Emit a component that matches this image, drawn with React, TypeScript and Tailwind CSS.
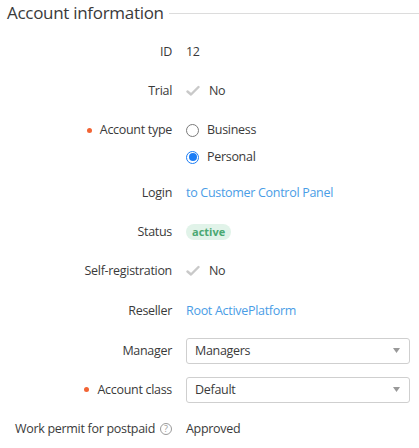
import React from "react";

const font = { fontFamily: '"Open Sans", "Noto Sans", sans-serif' };

function Check() {
  return (
    <svg width="14" height="12" viewBox="0 0 14 12" className="mr-[9px]">
      <path d="M1.5 6.5 L5 9.5 L12.5 2" fill="none" stroke="#c9c9c9" strokeWidth="2.4" strokeLinecap="round" strokeLinejoin="round" />
    </svg>
  );
}

function Caret() {
  return (
    <svg width="7" height="5" viewBox="0 0 7 5">
      <path d="M0 0 H7 L3.5 5 Z" fill="#999" />
    </svg>
  );
}

function Label({ children, required, className = "" }: { children: React.ReactNode; required?: boolean; className?: string }) {
  return (
    <div className={`flex items-center justify-end text-[#3a3a3a] ${className}`}>
      {required && <span className="w-[5px] h-[5px] rounded-full bg-[#f26434] mr-[8px]" />}
      {children}
    </div>
  );
}

function Select({ value }: { value: string }) {
  return (
    <div className="w-[224px] h-[26px] border border-[#cfcfcf] rounded-[3px] flex items-center justify-between pl-[8px] pr-[9px] text-[#3a3a3a] bg-white">
      <span>{value}</span>
      <Caret />
    </div>
  );
}

export default function App() {
  return (
    <div className="w-[419px] h-[448px] bg-white overflow-hidden text-[12.5px] tracking-[-0.3px] leading-[18px]" style={font}>
      <div className="flex items-center h-[26px] pl-[7px]">
        <span className="text-[17px] tracking-[-0.3px] text-[#3a3a3a] leading-[26px]">Account information</span>
        <div className="flex-1 h-px bg-[#dcdcdc] ml-[5px] mt-[1px]" />
      </div>
      <div className="grid grid-cols-[172px_1fr] gap-x-[14px] mt-[7px]">
        <Label className="h-[38px]">ID</Label>
        <div className="h-[38px] flex items-center text-[#3a3a3a]">12</div>

        <Label className="h-[39px]">Trial</Label>
        <div className="h-[39px] flex items-center text-[#3a3a3a]"><Check />No</div>

        <div className="h-[63px] pt-[9px]">
          <Label className="h-[22px]" required>Account type</Label>
        </div>
        <div className="h-[63px] pt-[9px] flex flex-col gap-[5px] text-[#3a3a3a]">
          <div className="h-[22px] flex items-center">
            <span className="w-[13px] h-[13px] rounded-full border border-[#7a7a7a] mr-[8px]" />
            Business
          </div>
          <div className="h-[22px] flex items-center">
            <span className="w-[13px] h-[13px] rounded-full border border-[#1a7cf5] mr-[8px] flex items-center justify-center">
              <span className="w-[8px] h-[8px] rounded-full bg-[#1a7cf5]" />
            </span>
            Personal
          </div>
        </div>

        <Label className="h-[39px]">Login</Label>
        <div className="h-[39px] flex items-center text-[#4a9de6]">to Customer Control Panel</div>

        <Label className="h-[39px]">Status</Label>
        <div className="h-[39px] flex items-center">
          <span className="h-[16px] px-[6px] rounded-full bg-[#e1f3e9] text-[#4aa872] text-[11px] tracking-normal font-bold leading-[16px]">active</span>
        </div>

        <Label className="h-[39px]">Self-registration</Label>
        <div className="h-[39px] flex items-center text-[#3a3a3a]"><Check />No</div>

        <Label className="h-[41px]">Reseller</Label>
        <div className="h-[41px] flex items-center text-[#4a9de6]">Root ActivePlatform</div>

        <Label className="h-[39px]">Manager</Label>
        <div className="h-[39px] flex items-center"><Select value="Managers" /></div>

        <Label className="h-[39px]" required>Account class</Label>
        <div className="h-[39px] flex items-center"><Select value="Default" /></div>

        <Label className="h-[39px]">
          Work permit for postpaid
          <span className="ml-[5px] w-[12px] h-[12px] rounded-full border border-[#9a9a9a] text-[#9a9a9a] text-[9px] tracking-normal leading-[10px] flex items-center justify-center">?</span>
        </Label>
        <div className="h-[39px] flex items-center text-[#3a3a3a]">Approved</div>
      </div>
    </div>
  );
}
